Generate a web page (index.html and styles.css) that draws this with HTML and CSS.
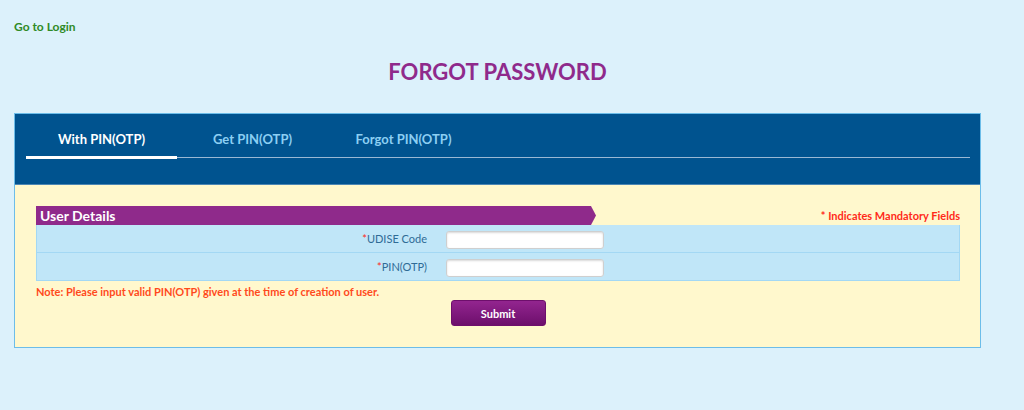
FILE: index.html
```html
<!DOCTYPE html>
<html lang="en">
<head>
  <meta charset="UTF-8" />
  <title>Forgot Password</title>
  <link rel="stylesheet" href="styles.css">
</head>
<body>

  <div class="page">
    <div class="top-link">
      <a href="#">Go to Login</a>
    </div>

    <h1 class="page-title">FORGOT PASSWORD</h1>

    <div class="panel">
      <div class="panel-head">
        <ul class="tabs">
          <li class="active">With PIN(OTP)</li>
          <li>Get PIN(OTP)</li>
          <li>Forgot PIN(OTP)</li>
        </ul>
      </div>

      <div class="panel-body">
        <div class="section-head">
          <div class="section-title">User Details</div>
          <div class="mandatory">* Indicates Mandatory Fields</div>
        </div>

        <div class="form-table">
          <div class="form-row">
            <label class="form-label"><span class="req">*</span>UDISE Code</label>
            <div class="form-field"><input type="text" /></div>
          </div>
          <div class="form-row">
            <label class="form-label"><span class="req">*</span>PIN(OTP)</label>
            <div class="form-field"><input type="text" /></div>
          </div>
        </div>

        <p class="note">Note: Please input valid PIN(OTP) given at the time of creation of user.</p>

        <div class="actions">
          <button class="submit-btn">Submit</button>
        </div>
      </div>
    </div>
  </div>

</body>
</html>
```

FILE: styles.css
```css
body {
  margin: 0;
  font-family: 'Lato', 'Open Sans', sans-serif;
  background: #dcf1fb;
}

.page {
  margin: 0 43px 0 14px;
}

.top-link {
  padding-top: 15px;
  height: 25px;
}

.top-link a {
  color: #2f8a25;
  font-weight: bold;
  font-size: 12px;
  text-decoration: none;
}

.page-title {
  margin: 18px 0 0 0;
  text-align: center;
  font-size: 22px;
  color: #8f2a8b;
  height: 55px;
  line-height: 28px;
}

/* Panel */
.panel {
  border: 1px solid #6cbde9;
  background: #fff8cd;
}

.panel-head {
  background: #00538f;
  height: 70px;
  padding: 0 10px 0 11px;
  border-bottom: 1px solid #4c86b3;
}

.tabs {
  list-style: none;
  margin: 0;
  padding: 0;
  display: flex;
  border-bottom: 1px solid #9ab8d4;
  height: 43px;
}

.tabs li {
  width: 151px;
  text-align: center;
  color: #8ccff3;
  font-weight: bold;
  font-size: 13px;
  line-height: 14px;
  padding-top: 18px;
  box-sizing: border-box;
}

.tabs li.active {
  color: #fff;
  border-bottom: 3px solid #fff;
  margin-bottom: -2px;
}

/* Body */
.panel-body {
  padding: 21px 20px 21px 21px;
}

.section-head {
  display: flex;
  justify-content: space-between;
  align-items: flex-end;
}

.section-title {
  width: 556px;
  height: 19px;
  padding-left: 4px;
  background: #8f2a8b;
  color: #fff;
  font-weight: bold;
  font-size: 14px;
  line-height: 19px;
  clip-path: polygon(0 0, 555px 0, 100% 50%, 555px 100%, 0 100%);
}

.mandatory {
  color: #ff2a1a;
  font-weight: bold;
  font-size: 11px;
  padding-bottom: 3px;
}

.form-table {
  border: 1px solid #a3d8f4;
  border-top: none;
}

.form-row {
  display: flex;
  align-items: center;
  background: #c0e6f8;
  height: 27px;
}

.form-row + .form-row {
  border-top: 1px solid #a3d8f4;
}

.form-label {
  width: 390px;
  text-align: right;
  color: #2f6b96;
  font-size: 11px;
  padding-right: 19px;
}

.req {
  color: #ff2a1a;
}

.form-field input {
  width: 156px;
  height: 16px;
  padding: 0;
  border: 1px solid #cfcfcf;
  border-radius: 3px;
  background: #fff;
  box-shadow: inset 0 1px 2px rgba(0, 0, 0, 0.15);
}

.note {
  margin: 4px 0 0 0;
  color: #ff4a1c;
  font-weight: bold;
  font-size: 11px;
}

.actions {
  text-align: center;
  margin-top: 2px;
}

.submit-btn {
  width: 95px;
  height: 26px;
  border: 1px solid #6e0f6c;
  border-radius: 3px;
  background: linear-gradient(to bottom, #93258f, #6d0f6c);
  color: #fff;
  font-family: 'Lato', sans-serif;
  font-weight: bold;
  font-size: 11px;
  cursor: pointer;
}
```
